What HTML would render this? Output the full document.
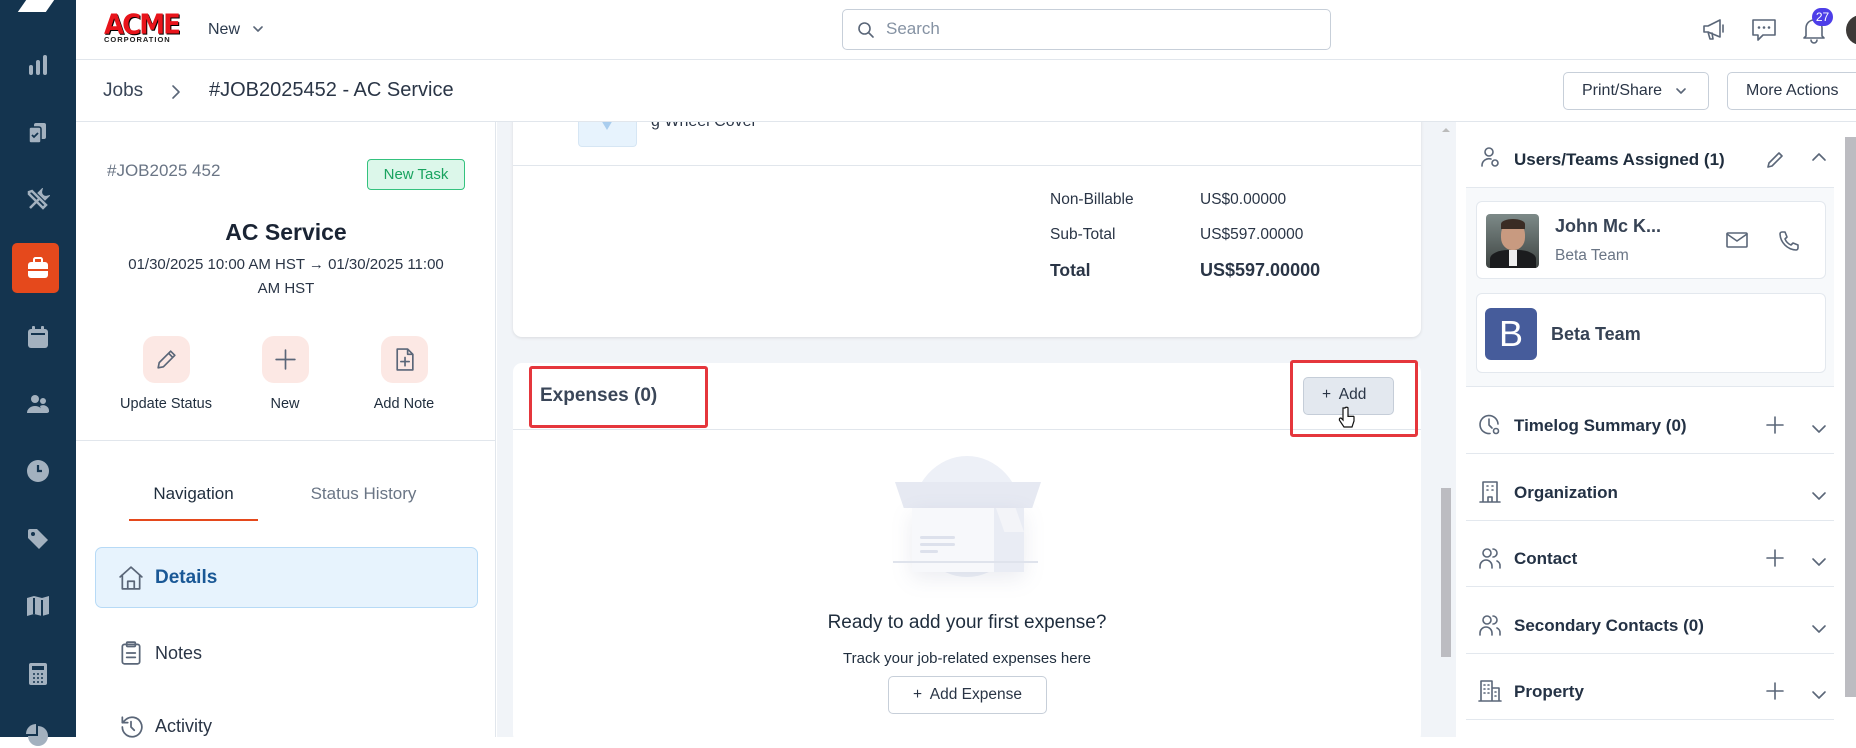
<!DOCTYPE html>
<html><head><meta charset="utf-8"><style>
*{box-sizing:border-box;margin:0;padding:0}
body{width:1856px;height:737px;overflow:hidden;font-family:"Liberation Sans",sans-serif;color:#1f2d3d;background:#fff;position:relative}
.a{position:absolute}
.sb{left:0;top:0;width:76px;height:737px;background:#14344f}
.si{position:absolute;left:26px;width:24px;height:24px;fill:#a3b1bf}
.t{position:absolute;white-space:nowrap}
.ic{stroke:#5a6678;fill:none;stroke-width:1.6;stroke-linecap:round;stroke-linejoin:round}
.row{position:absolute;left:1466px;width:368px;height:66px;border-bottom:1px solid #e3e8ee}
.row .t{left:48px;top:28px;font-size:17px;font-weight:600;color:#243245}
.row svg{position:absolute}
</style></head><body>
<div class="a sb">
  <div class="a" style="left:22px;top:0;width:28px;height:12px;background:#fff;transform:skewX(-35deg)"></div>
  <svg class="si" style="top:53px" viewBox="0 0 24 24"><rect x="3" y="12" width="4" height="10" rx="2"/><rect x="10" y="7" width="4" height="15" rx="2"/><rect x="17" y="2" width="4" height="20" rx="2"/></svg>
  <svg class="si" style="top:121px" viewBox="0 0 24 24"><rect x="8" y="2" width="12" height="16" rx="2"/><rect x="3" y="6" width="12" height="16" rx="2" stroke="#14344f" stroke-width="1.5"/><path d="M6 14l2 2 4-4" stroke="#14344f" stroke-width="1.8" fill="none"/></svg>
  <svg class="si" style="top:188px" viewBox="0 0 24 24"><path d="M4 20l9-9M15 3a5 5 0 0 0 6 6l-2 2-6-6zM3 4l3-1 14 14-3 3L3 6z" stroke="#a3b1bf" stroke-width="2.5" fill="none"/></svg>
  <div class="a" style="left:12px;top:243px;width:47px;height:50px;background:#e5491c;border-radius:5px"></div>
  <svg class="si" style="top:256px;fill:#fff" viewBox="0 0 24 24"><rect x="8" y="2" width="8" height="5" rx="1.5" fill="none" stroke="#fff" stroke-width="2"/><rect x="2" y="6" width="20" height="16" rx="3"/><rect x="2" y="13" width="20" height="2" fill="#e5491c"/></svg>
  <svg class="si" style="top:325px" viewBox="0 0 24 24"><rect x="6" y="1" width="3" height="5" rx="1"/><rect x="15" y="1" width="3" height="5" rx="1"/><rect x="2" y="4" width="20" height="19" rx="3"/><rect x="5" y="8" width="14" height="2" fill="#14344f"/></svg>
  <svg class="si" style="top:392px" viewBox="0 0 24 24"><circle cx="9" cy="7" r="4"/><circle cx="17" cy="9" r="3"/><path d="M1 21a8 7 0 0 1 16 0zM15 21a6 6 0 0 1 8 0v0z"/><path d="M14 14a6 6 0 0 1 9 6h-7z"/></svg>
  <svg class="si" style="top:459px" viewBox="0 0 24 24"><circle cx="12" cy="12" r="11"/><path d="M12 6v6h4" stroke="#14344f" stroke-width="2.2" fill="none"/></svg>
  <svg class="si" style="top:527px" viewBox="0 0 24 24"><path d="M2 4a2 2 0 0 1 2-2h7l11 11-9 9L2 11z"/><circle cx="7" cy="7" r="2" fill="#14344f"/></svg>
  <svg class="si" style="top:594px" viewBox="0 0 24 24"><path d="M1 4l7-2 8 2 7-2v18l-7 2-8-2-7 2z"/><path d="M8 4v16M16 6v16" stroke="#14344f" stroke-width="2"/></svg>
  <svg class="si" style="top:662px" viewBox="0 0 24 24"><rect x="3" y="1" width="18" height="22" rx="2"/><rect x="6" y="4" width="12" height="4" fill="#14344f"/><path d="M7 12h2M11 12h2M15 12h2M7 16h2M11 16h2M15 16h2M7 20h2M11 20h2M15 20h2" stroke="#14344f" stroke-width="1.5"/></svg>
  <svg class="si" style="top:724px" viewBox="0 0 24 24"><path d="M12 2a10 10 0 1 1-10 10h10z"/><path d="M10 0v10H0A10 10 0 0 1 10 0z"/></svg>
</div>
<div class="a" style="left:76px;top:0;width:1780px;height:60px;border-bottom:1px solid #e1e6ec;background:#fff"></div>
<div class="t" style="left:104px;top:10px;font-size:26px;font-weight:900;color:#e8141b;letter-spacing:-2px;font-family:'DejaVu Sans',sans-serif;transform:scaleY(1.05);text-shadow:1px 1px 0 #000">ACME</div>
<div class="t" style="left:104px;top:35px;font-size:7.5px;font-weight:900;color:#222;letter-spacing:1px">CORPORATION</div>
<div class="t" style="left:208px;top:21px;font-size:16px;color:#2c3a4d">New</div>
<svg class="a" style="left:252px;top:25px" width="12" height="8" viewBox="0 0 12 8"><path d="M2 2l4 4 4-4" class="ic" stroke="#2c3a4d"/></svg>
<div class="a" style="left:842px;top:9px;width:489px;height:41px;border:1px solid #c7cfd9;border-radius:5px"></div>
<svg class="a" style="left:857px;top:21px" width="18" height="18" viewBox="0 0 18 18"><circle cx="7.5" cy="7.5" r="5.5" class="ic" stroke="#8592a3"/><path d="M12 12l4 4" class="ic" stroke="#8592a3"/></svg>
<div class="t" style="left:886px;top:19px;font-size:17px;color:#8592a3">Search</div>
<svg class="a" style="left:1700px;top:15px" width="28" height="28" viewBox="0 0 28 28"><path d="M4 11h4l12-6v17l-12-5H4z M8 17l2 7h3l-1-6 M23 10v7" class="ic" stroke="#5a6678" stroke-width="2.2"/></svg>
<svg class="a" style="left:1750px;top:16px" width="28" height="28" viewBox="0 0 28 28"><path d="M3 4h22v15H13l-5 5v-5H3z" class="ic" stroke="#5a6678" stroke-width="2.2"/><circle cx="9" cy="11.5" r="1.3" fill="#5a6678"/><circle cx="14" cy="11.5" r="1.3" fill="#5a6678"/><circle cx="19" cy="11.5" r="1.3" fill="#5a6678"/></svg>
<svg class="a" style="left:1800px;top:15px" width="28" height="30" viewBox="0 0 28 30"><path d="M6 21V13a8 8 0 0 1 16 0v8l2 2H4z M11 25a3 3 0 0 0 6 0" class="ic" stroke="#5a6678" stroke-width="2.2"/></svg>
<div class="a" style="left:1812px;top:8px;width:21px;height:18px;border-radius:9px;background:#4d3ee8;color:#fff;font-size:12px;text-align:center;line-height:18px">27</div>
<div class="a" style="left:1846px;top:15px;width:30px;height:30px;border-radius:50%;background:#3d3a38"></div>
<div class="a" style="left:497px;top:122px;width:959px;height:615px;background:#f1f4f8"></div>
<div class="a" style="left:513px;top:110px;width:908px;height:227px;background:#fff;border-radius:0 0 9px 9px;box-shadow:0 1px 3px rgba(0,0,0,.1)"></div>
<div class="a" style="left:578px;top:110px;width:59px;height:37px;background:#e7f3fd;border:1px solid #d6e6f4;border-top:none;border-radius:0 0 4px 4px"></div>
<div class="a" style="left:595px;top:110px;width:24px;height:20px;background:#a9cdee;clip-path:polygon(0 0,100% 0,50% 100%)"></div>
<div class="t" style="left:651px;top:113px;font-size:16px;color:#2a3546">g Wheel Cover</div>
<div class="a" style="left:76px;top:60px;width:1780px;height:62px;border-bottom:1px solid #e1e6ec;background:#fff"></div>
<div class="t" style="left:103px;top:80px;font-size:19px;color:#3a4658">Jobs</div>
<svg class="a" style="left:170px;top:84px" width="12" height="16" viewBox="0 0 12 16"><path d="M3 2l6 6-6 6" class="ic" stroke="#5a6678" stroke-width="2"/></svg>
<div class="t" style="left:209px;top:79px;font-size:20px;color:#2a3546;font-weight:500">#JOB2025452 - AC Service</div>
<div class="a" style="left:1563px;top:72px;width:146px;height:38px;border:1px solid #c7cfd9;border-radius:5px"></div>
<div class="t" style="left:1582px;top:82px;font-size:16px;color:#2a3546">Print/Share</div>
<svg class="a" style="left:1675px;top:87px" width="12" height="8" viewBox="0 0 12 8"><path d="M2 2l4 4 4-4" class="ic" stroke="#2a3546" stroke-width="2"/></svg>
<div class="a" style="left:1727px;top:72px;width:140px;height:38px;border:1px solid #c7cfd9;border-radius:5px"></div>
<div class="t" style="left:1746px;top:82px;font-size:16px;color:#2a3546">More Actions</div>
<div class="a" style="left:76px;top:122px;width:420px;height:615px;background:#fff;border-right:1px solid #e1e6ec"></div>
<div class="t" style="left:107px;top:161px;font-size:17px;color:#6a7585">#JOB2025 452</div>
<div class="a" style="left:367px;top:159px;width:98px;height:31px;border:1px solid #34c27e;background:#dcf7ea;border-radius:4px;color:#19a35f;font-size:15px;text-align:center;line-height:29px">New Task</div>
<div class="t" style="left:76px;width:420px;text-align:center;top:219px;font-size:23px;font-weight:700;color:#1a2434">AC Service</div>
<div class="t" style="left:76px;width:420px;text-align:center;top:256px;font-size:15px;color:#2a3546">01/30/2025 10:00 AM HST → 01/30/2025 11:00</div>
<div class="t" style="left:76px;width:420px;text-align:center;top:280px;font-size:15px;color:#2a3546">AM HST</div>
<div class="a" style="left:143px;top:336px;width:47px;height:47px;border-radius:12px;background:#fce8e4"></div>
<svg class="a" style="left:154px;top:347px" width="25" height="25" viewBox="0 0 24 24"><path d="M4 20l1-5L16 4l4 4L9 19z M14 6l4 4" class="ic" stroke="#e5491c" stroke-width="2.2"/></svg>
<div class="a" style="left:262px;top:336px;width:47px;height:47px;border-radius:12px;background:#fce8e4"></div>
<svg class="a" style="left:273px;top:347px" width="25" height="25" viewBox="0 0 24 24"><path d="M12 3v18M3 12h18" class="ic" stroke="#e5491c" stroke-width="2.2"/></svg>
<div class="a" style="left:381px;top:336px;width:47px;height:47px;border-radius:12px;background:#fce8e4"></div>
<svg class="a" style="left:392px;top:347px" width="25" height="25" viewBox="0 0 24 24"><path d="M5 2h10l5 5v15H5z M15 2v5h5 M12.5 10v8 M8.5 14h8" class="ic" stroke="#e5491c" stroke-width="2.2"/></svg>
<div class="t" style="left:96px;width:140px;text-align:center;top:396px;font-size:14.5px;color:#1f2d3d">Update Status</div>
<div class="t" style="left:235px;width:100px;text-align:center;top:396px;font-size:14.5px;color:#1f2d3d">New</div>
<div class="t" style="left:354px;width:100px;text-align:center;top:396px;font-size:14.5px;color:#1f2d3d">Add Note</div>
<div class="a" style="left:76px;top:440px;width:420px;height:1px;background:#e1e6ec"></div>
<div class="t" style="left:129px;width:129px;text-align:center;top:484px;font-size:17px;color:#1f2d3d;font-weight:500">Navigation</div>
<div class="a" style="left:129px;top:519px;width:129px;height:2px;background:#e5491c"></div>
<div class="t" style="left:300px;width:127px;text-align:center;top:484px;font-size:17px;color:#6a7585;font-weight:500">Status History</div>
<div class="a" style="left:95px;top:547px;width:383px;height:61px;background:#e7f3fd;border:1px solid #b7daf6;border-radius:7px"></div>
<svg class="a" style="left:118px;top:565px" width="26" height="26" viewBox="0 0 24 24"><path d="M2 11L12 2l10 9 M4 9v13h16V9 M9 22v-7h6v7" class="ic" stroke="#1a5896" stroke-width="2.2"/></svg>
<div class="t" style="left:155px;top:567px;font-size:19px;font-weight:700;color:#1a5896">Details</div>
<svg class="a" style="left:118px;top:640px" width="26" height="26" viewBox="0 0 24 24"><rect x="4" y="4" width="16" height="18" rx="2" class="ic"/><rect x="8" y="2" width="8" height="4" rx="1" class="ic"/><path d="M8 12h8M8 16h8" class="ic"/></svg>
<div class="t" style="left:155px;top:643px;font-size:18px;color:#2a3546">Notes</div>
<svg class="a" style="left:118px;top:714px" width="26" height="26" viewBox="0 0 24 24"><path d="M4 12a9 9 0 1 0 3-6.7L4 8 M4 3v5h5 M12 7v5l3 3" class="ic" stroke-width="2"/></svg>
<div class="t" style="left:155px;top:716px;font-size:18px;color:#2a3546">Activity</div>
<div class="a" style="left:513px;top:165px;width:908px;height:1px;background:#e1e6ec"></div>
<div class="t" style="left:1050px;top:191px;font-size:15.5px;color:#2a3546">Non-Billable</div>
<div class="t" style="left:1200px;top:191px;font-size:15.5px;color:#2a3546">US$0.00000</div>
<div class="t" style="left:1050px;top:226px;font-size:15.5px;color:#2a3546">Sub-Total</div>
<div class="t" style="left:1200px;top:226px;font-size:15.5px;color:#2a3546">US$597.00000</div>
<div class="t" style="left:1050px;top:260px;font-size:17.5px;font-weight:700;color:#2a3546">Total</div>
<div class="t" style="left:1200px;top:260px;font-size:18px;font-weight:700;color:#2a3546">US$597.00000</div>
<div class="a" style="left:513px;top:363px;width:908px;height:380px;background:#fff;border-radius:9px"></div>
<div class="a" style="left:513px;top:429px;width:908px;height:1px;background:#e1e6ec"></div>
<div class="t" style="left:540px;top:385px;font-size:19px;font-weight:600;color:#3a4658">Expenses (0)</div>
<div class="a" style="left:529px;top:366px;width:179px;height:62px;border:3px solid #e5363c;border-radius:3px"></div>
<div class="a" style="left:1303px;top:377px;width:91px;height:38px;background:#e3e8ef;border:1px solid #c5cdd8;border-radius:5px"></div>
<div class="t" style="left:1322px;top:386px;font-size:15.5px;color:#2a3546">+&nbsp; Add</div>
<div class="a" style="left:1290px;top:360px;width:128px;height:77px;border:3px solid #e5363c;border-radius:3px"></div>
<svg class="a" style="left:1338px;top:406px" width="18" height="24" viewBox="0 0 18 24"><path d="M5 2v12l-2-2c-2 0-2 2-1 3l4 6h8l2-6v-4c0-1-2-1-2 0 0-1-2-1-2 0 0-1-2-1-2 0V2c0-1-3-1-3 0z" fill="#fff" stroke="#111" stroke-width="1.2"/></svg>
<div class="a" style="left:912px;top:456px;width:110px;height:121px;border-radius:50%;background:#edf0f7"></div>
<div class="a" style="left:895px;top:482px;width:146px;height:26px;background:#e6e9f2;clip-path:polygon(0 0,100% 0,94% 100%,6% 100%)"></div>
<div class="a" style="left:912px;top:508px;width:112px;height:64px;background:#e9ecf4;box-shadow:0 6px 20px rgba(120,130,160,.15)"></div>
<div class="a" style="left:912px;top:508px;width:82px;height:64px;background:#f7f8fb"></div>
<div class="a" style="left:996px;top:508px;width:28px;height:24px;background:#f3f4f8;clip-path:polygon(0 0,70% 0,100% 100%,30% 100%)"></div>
<div class="a" style="left:920px;top:536px;width:35px;height:3px;background:#dde1ec;border-radius:2px"></div>
<div class="a" style="left:920px;top:543px;width:35px;height:3px;background:#dde1ec;border-radius:2px"></div>
<div class="a" style="left:920px;top:550px;width:18px;height:3px;background:#dde1ec;border-radius:2px"></div>
<div class="a" style="left:893px;top:561px;width:145px;height:2px;background:#dfe3ec"></div>
<div class="t" style="left:513px;width:908px;text-align:center;top:612px;font-size:19px;color:#1f2d3d">Ready to add your first expense?</div>
<div class="t" style="left:513px;width:908px;text-align:center;top:650px;font-size:15px;color:#1f2d3d">Track your job-related expenses here</div>
<div class="a" style="left:888px;top:676px;width:159px;height:38px;border:1px solid #c7cfd9;border-radius:5px;background:#fff"></div>
<div class="t" style="left:888px;width:159px;text-align:center;top:686px;font-size:15.5px;color:#2a3546">+&nbsp; Add Expense</div>
<div class="a" style="left:1441px;top:488px;width:10px;height:169px;background:#bcbcc1"></div>
<div class="a" style="left:1442px;top:128px;width:0;height:0;border-left:4px solid transparent;border-right:4px solid transparent;border-bottom:4px solid #bbb"></div>
<div class="a" style="left:1456px;top:122px;width:400px;height:615px;background:#fff"></div>
<div class="a" style="left:1845px;top:137px;width:11px;height:560px;background:#bcbcc1"></div>
<svg class="a" style="left:1480px;top:146px" width="24" height="26" viewBox="0 0 24 26"><circle cx="9" cy="6" r="4" class="ic"/><path d="M2 20a7 7 0 0 1 9-7" class="ic"/><circle cx="15" cy="17" r="3" class="ic"/></svg>
<div class="t" style="left:1514px;top:150px;font-size:17px;font-weight:600;color:#1f2d3d">Users/Teams Assigned (1)</div>
<svg class="a" style="left:1765px;top:150px" width="20" height="20" viewBox="0 0 20 20"><path d="M3 17l1-4L14 3l3 3L7 16z" class="ic" stroke="#1f2d3d" stroke-width="1.8"/></svg>
<svg class="a" style="left:1810px;top:150px" width="18" height="14" viewBox="0 0 18 14"><path d="M3 10l6-6 6 6" class="ic" stroke="#1f2d3d" stroke-width="2"/></svg>
<div class="a" style="left:1466px;top:187px;width:368px;height:200px;background:#f7f9fb;border-top:1px solid #e3e8ee;border-bottom:1px solid #e3e8ee"></div>
<div class="a" style="left:1476px;top:201px;width:350px;height:78px;background:#fff;border:1px solid #e3e8ee;border-radius:6px"></div>
<div class="a" style="left:1486px;top:214px;width:53px;height:54px;border-radius:4px;background:linear-gradient(#7d8a88,#3e4442);overflow:hidden">
  <div class="a" style="left:15px;top:8px;width:24px;height:28px;border-radius:45%;background:#c89a80"></div>
  <div class="a" style="left:15px;top:5px;width:24px;height:10px;border-radius:50% 50% 0 0;background:#3a2c24"></div>
  <div class="a" style="left:4px;top:36px;width:46px;height:22px;border-radius:40% 40% 0 0;background:#1b1c1e"></div>
  <div class="a" style="left:23px;top:36px;width:8px;height:16px;background:#eee"></div>
</div>
<div class="t" style="left:1555px;top:216px;font-size:18px;font-weight:700;color:#374355">John Mc K...</div>
<div class="t" style="left:1555px;top:247px;font-size:15.5px;color:#6a7585">Beta Team</div>
<svg class="a" style="left:1725px;top:230px" width="24" height="20" viewBox="0 0 24 20"><rect x="2" y="3" width="20" height="14" rx="1" class="ic" stroke-width="2"/><path d="M2 4l10 7 10-7" class="ic" stroke-width="2"/></svg>
<svg class="a" style="left:1777px;top:229px" width="24" height="24" viewBox="0 0 24 24"><path d="M5 3h3l2 5-2 2a11 11 0 0 0 6 6l2-2 5 2v3a2 2 0 0 1-2 2A17 17 0 0 1 3 5a2 2 0 0 1 2-2z" class="ic" stroke-width="1.8"/></svg>
<div class="a" style="left:1476px;top:293px;width:350px;height:80px;background:#fff;border:1px solid #e3e8ee;border-radius:6px"></div>
<div class="a" style="left:1485px;top:308px;width:52px;height:52px;border-radius:6px;background:#465c9b;color:#fff;font-size:36px;text-align:center;line-height:52px">B</div>
<div class="t" style="left:1551px;top:324px;font-size:18px;font-weight:700;color:#374355">Beta Team</div>
<div class="row" style="top:388px"><svg style="left:12px;top:25px" width="24" height="24" viewBox="0 0 24 24"><path d="M20 11a9 9 0 1 0-8 9.5" class="ic" stroke-width="1.8"/><path d="M11 6v6l3 3" class="ic" stroke-width="1.8"/><circle cx="18" cy="18" r="2.5" class="ic" stroke-width="1.8"/></svg><div class="t">Timelog Summary (0)</div></div>
<div class="row" style="top:455px"><svg style="left:12px;top:25px" width="24" height="24" viewBox="0 0 24 24"><path d="M5 22V2h14v20 M2 22h20 M9 6h1M14 6h1M9 10h1M14 10h1 M10 22v-5h4v5" class="ic" stroke-width="1.6"/></svg><div class="t">Organization</div></div>
<div class="row" style="top:521px"><svg style="left:12px;top:25px" width="24" height="24" viewBox="0 0 24 24"><circle cx="9" cy="7" r="4" class="ic"/><path d="M2 22v-2a6 6 0 0 1 12 0v2 M15 3a4 4 0 0 1 0 8 M19 15a5 5 0 0 1 3 5v2" class="ic"/></svg><div class="t">Contact</div></div>
<div class="row" style="top:588px"><svg style="left:12px;top:25px" width="24" height="24" viewBox="0 0 24 24"><circle cx="9" cy="7" r="4" class="ic"/><path d="M2 22v-2a6 6 0 0 1 12 0v2 M15 3a4 4 0 0 1 0 8 M19 15a5 5 0 0 1 3 5v2" class="ic"/></svg><div class="t">Secondary Contacts (0)</div></div>
<div class="row" style="top:654px"><svg style="left:12px;top:25px" width="24" height="24" viewBox="0 0 24 24"><path d="M3 22V2h11v20 M14 9h7v13 M1 22h22 M6 6h1M10 6h1M6 10h1M10 10h1M6 14h1M10 14h1M17 13h1M17 17h1" class="ic" stroke-width="1.6"/></svg><div class="t">Property</div></div>
<svg class="a" style="left:1765px;top:415px" width="20" height="20" viewBox="0 0 20 20"><path d="M10 2v16M2 10h16" class="ic" stroke="#1f2d3d" stroke-width="2"/></svg>
<svg class="a" style="left:1765px;top:548px" width="20" height="20" viewBox="0 0 20 20"><path d="M10 2v16M2 10h16" class="ic" stroke="#1f2d3d" stroke-width="2"/></svg>
<svg class="a" style="left:1765px;top:681px" width="20" height="20" viewBox="0 0 20 20"><path d="M10 2v16M2 10h16" class="ic" stroke="#1f2d3d" stroke-width="2"/></svg>
<svg class="a" style="left:1810px;top:422px" width="18" height="14" viewBox="0 0 18 14"><path d="M3 4l6 6 6-6" class="ic" stroke="#1f2d3d" stroke-width="2"/></svg>
<svg class="a" style="left:1810px;top:489px" width="18" height="14" viewBox="0 0 18 14"><path d="M3 4l6 6 6-6" class="ic" stroke="#1f2d3d" stroke-width="2"/></svg>
<svg class="a" style="left:1810px;top:555px" width="18" height="14" viewBox="0 0 18 14"><path d="M3 4l6 6 6-6" class="ic" stroke="#1f2d3d" stroke-width="2"/></svg>
<svg class="a" style="left:1810px;top:622px" width="18" height="14" viewBox="0 0 18 14"><path d="M3 4l6 6 6-6" class="ic" stroke="#1f2d3d" stroke-width="2"/></svg>
<svg class="a" style="left:1810px;top:688px" width="18" height="14" viewBox="0 0 18 14"><path d="M3 4l6 6 6-6" class="ic" stroke="#1f2d3d" stroke-width="2"/></svg>
</body></html>
